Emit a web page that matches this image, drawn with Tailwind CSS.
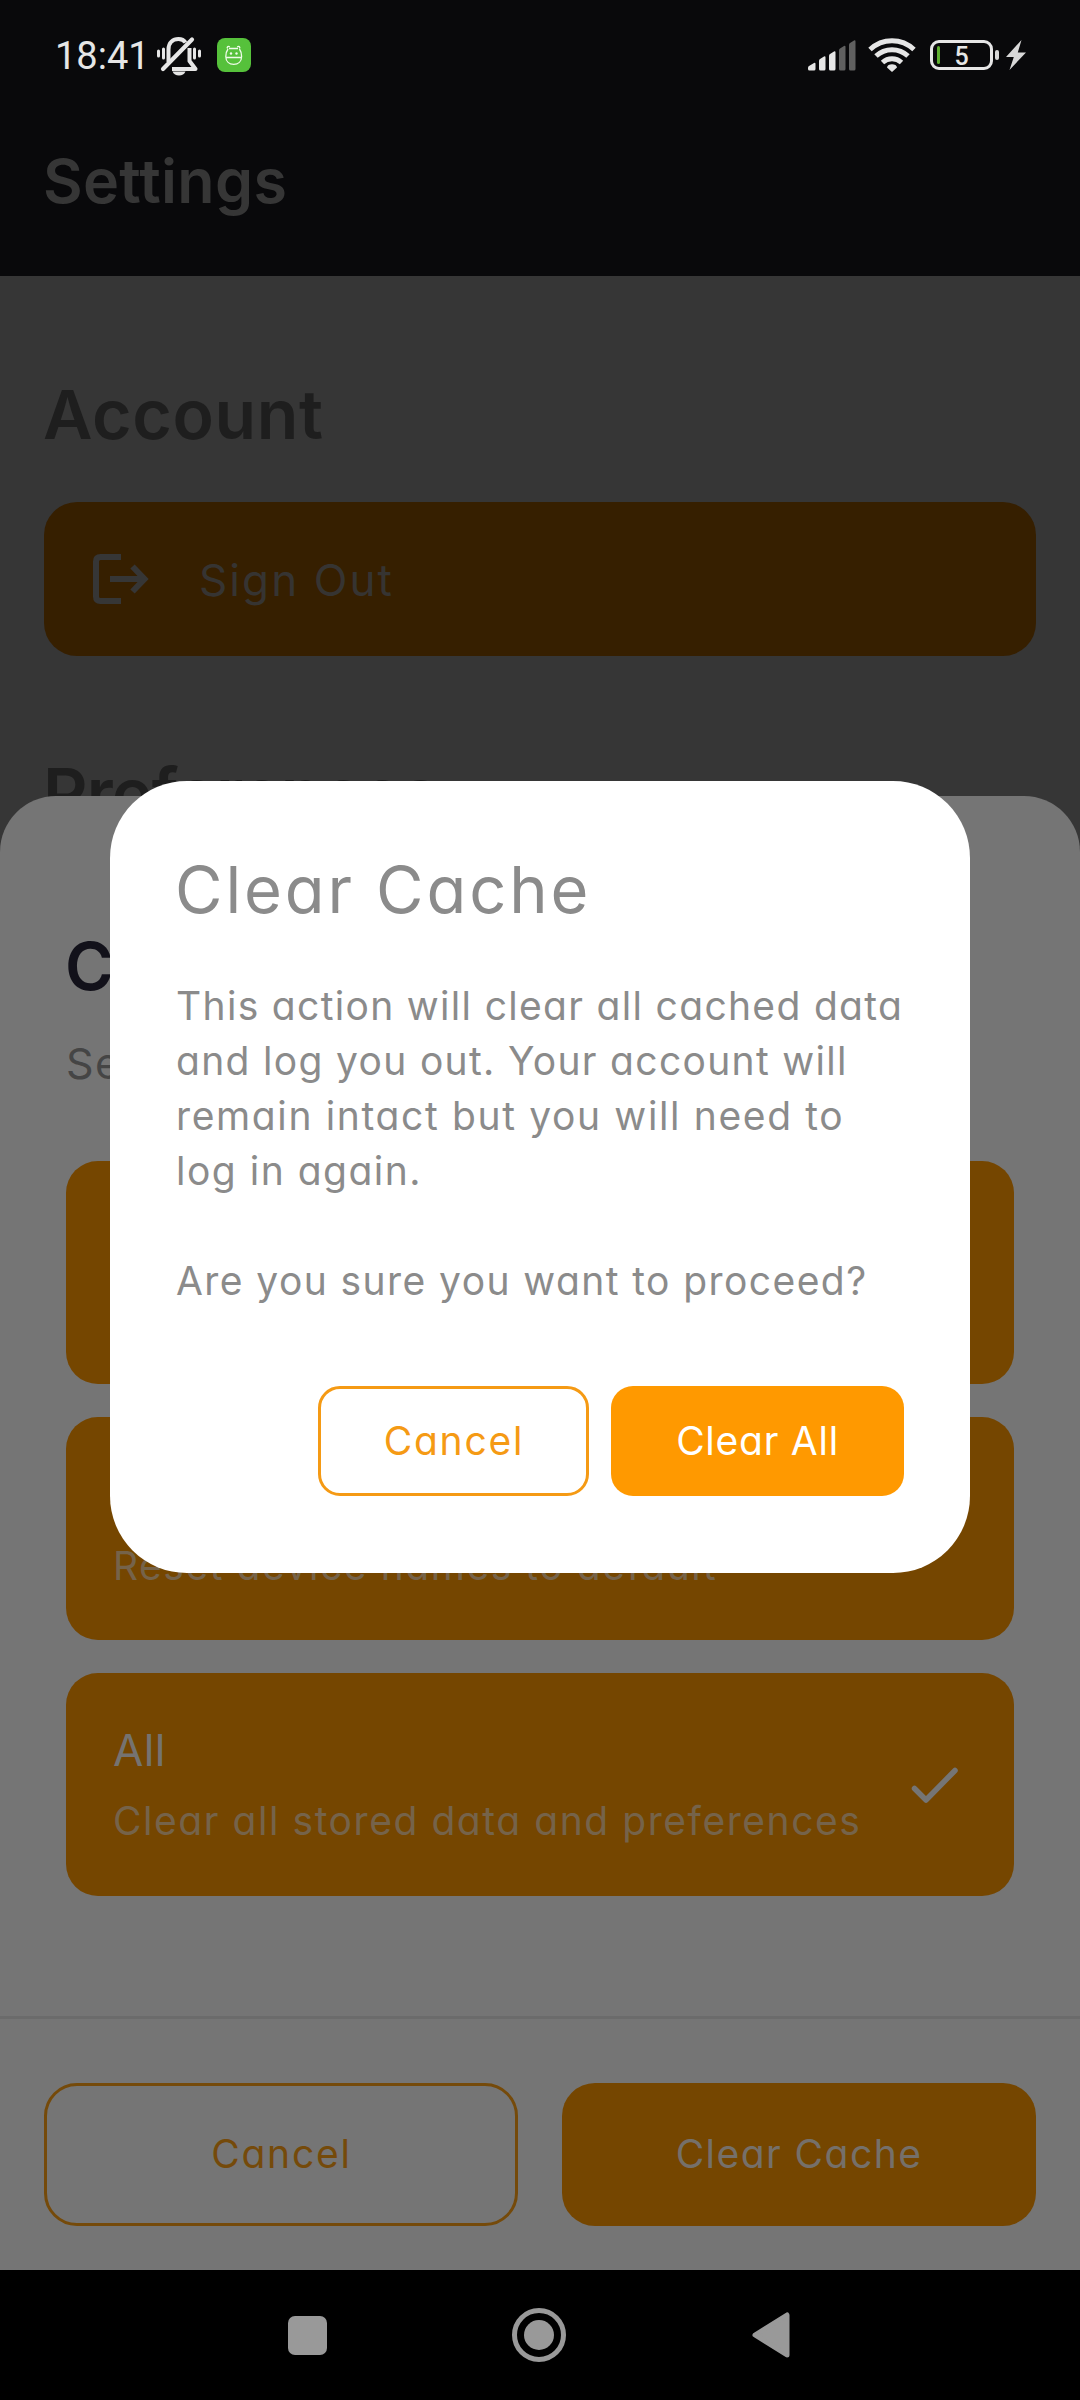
<!DOCTYPE html>
<html lang="en">
<head>
<meta charset="utf-8">
<title>Settings</title>
<script src="https://cdn.jsdelivr.net/npm/@tailwindcss/browser@4"></script>
</head>
<body class="bg-black">
<div class="relative w-[1080px] h-[2400px] overflow-hidden bg-[#363636] font-['Inter',sans-serif] [font-feature-settings:'cv11'] whitespace-nowrap">

  <header class="h-[276px] bg-[#09090b]">
    <div class="flex h-[110px] items-center justify-between pl-[55px] pr-[54px]">
      <div class="flex items-center">
        <span class="w-[88px] pt-[2px] font-['Roboto',sans-serif] text-[38px] font-[450] leading-none text-[#e6e6e6]">18:41</span>
        <svg class="ml-[13px] mt-[2px]" width="46" height="40" viewBox="0 0 46 40" fill="none" stroke="#e6e6e6">
          <path d="M12.500 26V13.500C12.500 6.500 17 3 22.500 3c3 0 5.500 1.200 7 3.500" stroke-width="4"/>
          <path d="M36 3.500L7 33" stroke-width="4.200" stroke-linecap="round"/>
          <path d="M16 33h23.500l-6-8V12" stroke-width="4" stroke-linejoin="round"/>
          <path d="M16.500 35.500h13c-1 2.500-3.500 4-6.500 4s-5.500-1.500-6.500-4z" fill="#e6e6e6" stroke="none"/>
          <path d="M2.500 15v5M7.500 13v9M38.500 13v9M43.500 15v5" stroke-width="3" stroke-linecap="round"/>
        </svg>
        <svg class="ml-[15px]" width="34" height="34" viewBox="0 0 34 34">
          <rect width="34" height="34" rx="8" fill="#56c13b"/>
          <g fill="none" stroke="#effbe9" stroke-width="1.300">
            <path d="M12 10.500h9M10.500 10.500c-1-1.500 1-3 2.200-1.500M22.500 10.500c1-1.500-1-3-2.200-1.500"/>
            <path d="M11 11c-1.500 2-2.200 4.500-2.200 7.500 0 5 3.500 7.800 7.900 7.800s7.900-2.800 7.900-7.800c0-3-.7-5.500-2.200-7.500M9 19.500h15.500"/>
          </g>
          <circle cx="14" cy="15.500" r="1.200" fill="#effbe9"/><circle cx="19.500" cy="15.500" r="1.200" fill="#effbe9"/>
        </svg>
      </div>
      <div class="flex items-center">
        <svg width="50" height="32" viewBox="0 0 50 32" fill="#e6e6e6">
          <path d="M1 27l5-3q1.500-.8 1.500 1v5q0 1.500-1.500 1.500H1.500Q0 31.500 0 30v-1q0-1.500 1-2z"/>
          <path d="M12 20l4-2.500q1.500-.8 1.500 1V30q0 1.500-1.500 1.500h-3.500Q11 31.500 11 30v-8q0-1.500 1-2z"/>
          <path d="M22 15l4-2.500q1.500-.8 1.500 1V30q0 1.500-1.500 1.500h-3.500Q21 31.500 21 30V17q0-1.500 1-2z"/>
          <g fill="#606060"><path d="M32 9.500L36 7q1.500-.8 1.500 1v22q0 1.500-1.500 1.500h-3.500Q31 31.500 31 30V11.500q0-1.500 1-2z"/>
          <path d="M42 4l4-2.500q1.500-.8 1.500 1V30q0 1.500-1.500 1.500h-3.500Q41 31.500 41 30V6q0-1.500 1-2z"/></g>
        </svg>
        <svg class="ml-[10px]" width="48" height="36" viewBox="0 0 48 36" fill="none" stroke="#e6e6e6" stroke-width="5">
          <path d="M2 12.500C14.500.8 33.500.8 46 12.500"/>
          <path d="M8 19c9-8.500 23-8.500 32 0"/>
          <path d="M14.500 25.500c5.500-5 13.500-5 19 0"/>
          <path d="M19 30.500c0-4.500 10-4.500 10 0L24 35z" fill="#e6e6e6" stroke="none"/>
        </svg>
        <div class="ml-[14px] flex items-center">
          <div class="flex h-[30px] w-[63px] items-center rounded-[9px] border-3 border-[#e6e6e6] pl-[4px]">
            <div class="h-[18px] w-[2.500px] rounded-full bg-[#5fb030]"></div>
            <div class="w-[42px] pl-[2px] pt-[2px] text-center font-['Roboto',sans-serif] text-[25px] font-medium leading-none text-[#e6e6e6]">5</div>
          </div>
          <div class="ml-[2px] h-[10px] w-[4px] rounded-[2px] bg-[#d8d8d8]"></div>
        </div>
        <svg class="ml-[7px]" width="20" height="30" viewBox="0 0 20 30" fill="#d8d8d8"><path d="M15.500 0L0 17h7.800L3.500 30 20 12.500h-8.200z"/></svg>
      </div>
    </div>
    <h1 class="pl-[43px] pt-[41px] text-[61px] font-semibold leading-[60px] tracking-[0.3px] text-[#363636]">Settings</h1>
  </header>

  <main class="px-[44px] pt-[98px]">
    <h2 class="-ml-px text-[68px] font-semibold leading-[80px] tracking-[0.6px] text-[#1e1e1e]">Account</h2>
    <div class="mt-[48px] flex h-[154px] items-center rounded-[33px] bg-[#361f00] pl-[49px] text-[#363432]">
      <svg width="56" height="52" viewBox="0 0 56 52" fill="none" stroke="#363636" stroke-width="6">
        <path d="M28 4H7.500Q3 4 3 8.500v35Q3 48 7.500 48H28"/>
        <path d="M17 26h34M39.500 13.500L51.500 26 39.500 38.500"/>
      </svg>
      <span class="ml-[50px] pt-[2px] text-[44px] leading-[60px] tracking-[2.1px]">Sign Out</span>
    </div>
    <h2 class="-ml-px mt-[97px] text-[69px] font-semibold leading-[80px] tracking-[-0.85px] text-[#1e1e1e]">Preferences</h2>
  </main>

  <!-- bottom sheet -->
  <section class="absolute inset-x-0 top-[796px] flex h-[1474px] flex-col rounded-t-[56px] bg-[#757575]">
    <div class="px-[66px] pt-[130px]">
      <h2 class="-ml-px text-[66px] font-semibold leading-[80px] text-[#12111a]">Clear Cache</h2>
      <p class="mt-[27px] text-[43px] leading-[60px] tracking-[1.5px] text-[#454545]">Select what to clear</p>
      <div class="mt-[68px] flex flex-col gap-[33px] text-[#757370]">
        <div class="h-[223px] rounded-[32px] bg-[#754600]"></div>
        <div class="h-[223px] rounded-[32px] bg-[#754600] pl-[47px] pt-[119px]">
          <p class="text-[39px] leading-[60px] tracking-[1.55px] text-[#75634a]">Reset device names to default</p>
        </div>
        <div class="flex h-[223px] items-center rounded-[32px] bg-[#754600] pl-[47px] pr-[55px]">
          <div class="flex flex-1 flex-col gap-[11px] pt-[2px]">
            <p class="text-[44px] leading-[60px] tracking-[0.4px]">All</p>
            <p class="text-[39px] leading-[60px] tracking-[1.56px] text-[#75634a]">Clear all stored data and preferences</p>
          </div>
          <svg width="48" height="38" viewBox="0 0 48 38" fill="none" stroke="#757575" stroke-width="5.500" stroke-linecap="round" stroke-linejoin="round"><path d="M3.500 22.500L15 34 44 4.500"/></svg>
        </div>
      </div>
    </div>
    <div class="mt-auto flex h-[254px] gap-[44px] border-t-3 border-[#6b6b6b] px-[44px] pt-[64px] text-[39px]">
      <div class="flex h-[143px] w-[474px] items-center justify-center rounded-[33px] border-3 border-[#754a0a] pl-px tracking-[1.8px] text-[#754a0a]">Cancel</div>
      <div class="flex h-[143px] w-[474px] items-center justify-center rounded-[33px] bg-[#754600] tracking-[1.46px] text-[#75706a]">Clear Cache</div>
    </div>
  </section>

  <!-- confirmation dialog -->
  <section class="absolute left-[110px] top-[781px] h-[792px] w-[860px] rounded-[77px] bg-white px-[66px] pt-[69px] text-[#8b8b8b]">
    <h3 class="-ml-px text-[65px] leading-[80px] tracking-[2.9px]">Clear Cache</h3>
    <div class="mt-[48px] text-[39px] leading-[55px]">
      <p class="tracking-[1.32px]">This action will clear all cached data<br>and log you out. Your account will<br><span class="tracking-[1.64px]">remain intact but you will need to</span><br><span class="tracking-[1.5px]">log in again.</span></p>
      <p class="mt-[55px] tracking-[1.42px]">Are you sure you want to proceed?</p>
    </div>
    <div class="mt-[78px] flex justify-end gap-[22px] text-[39px]">
      <div class="flex h-[110px] w-[271px] items-center justify-center rounded-[22px] border-3 border-[#f59a14] pl-px tracking-[1.8px] text-[#f59a14]">Cancel</div>
      <div class="flex h-[110px] w-[293px] items-center justify-center rounded-[22px] bg-[#ff9900] tracking-[0.75px] text-white">Clear All</div>
    </div>
  </section>

  <!-- system navigation -->
  <nav class="absolute inset-x-0 bottom-0 flex h-[130px] items-center justify-center bg-black pr-[2px]">
    <div class="flex w-[232px] justify-center"><div class="size-[39px] rounded-[7px] bg-[#999]"></div></div>
    <div class="flex w-[232px] justify-center"><div class="flex size-[54px] items-center justify-center rounded-full border-5 border-[#999]"><div class="size-[30px] rounded-full bg-[#999]"></div></div></div>
    <div class="flex w-[232px] justify-center"><svg width="38" height="46" viewBox="0 0 38 46"><path d="M3 23L35 3v40z" fill="#999" stroke="#999" stroke-width="5" stroke-linejoin="round"/></svg></div>
  </nav>
</div>
</body>
</html>
